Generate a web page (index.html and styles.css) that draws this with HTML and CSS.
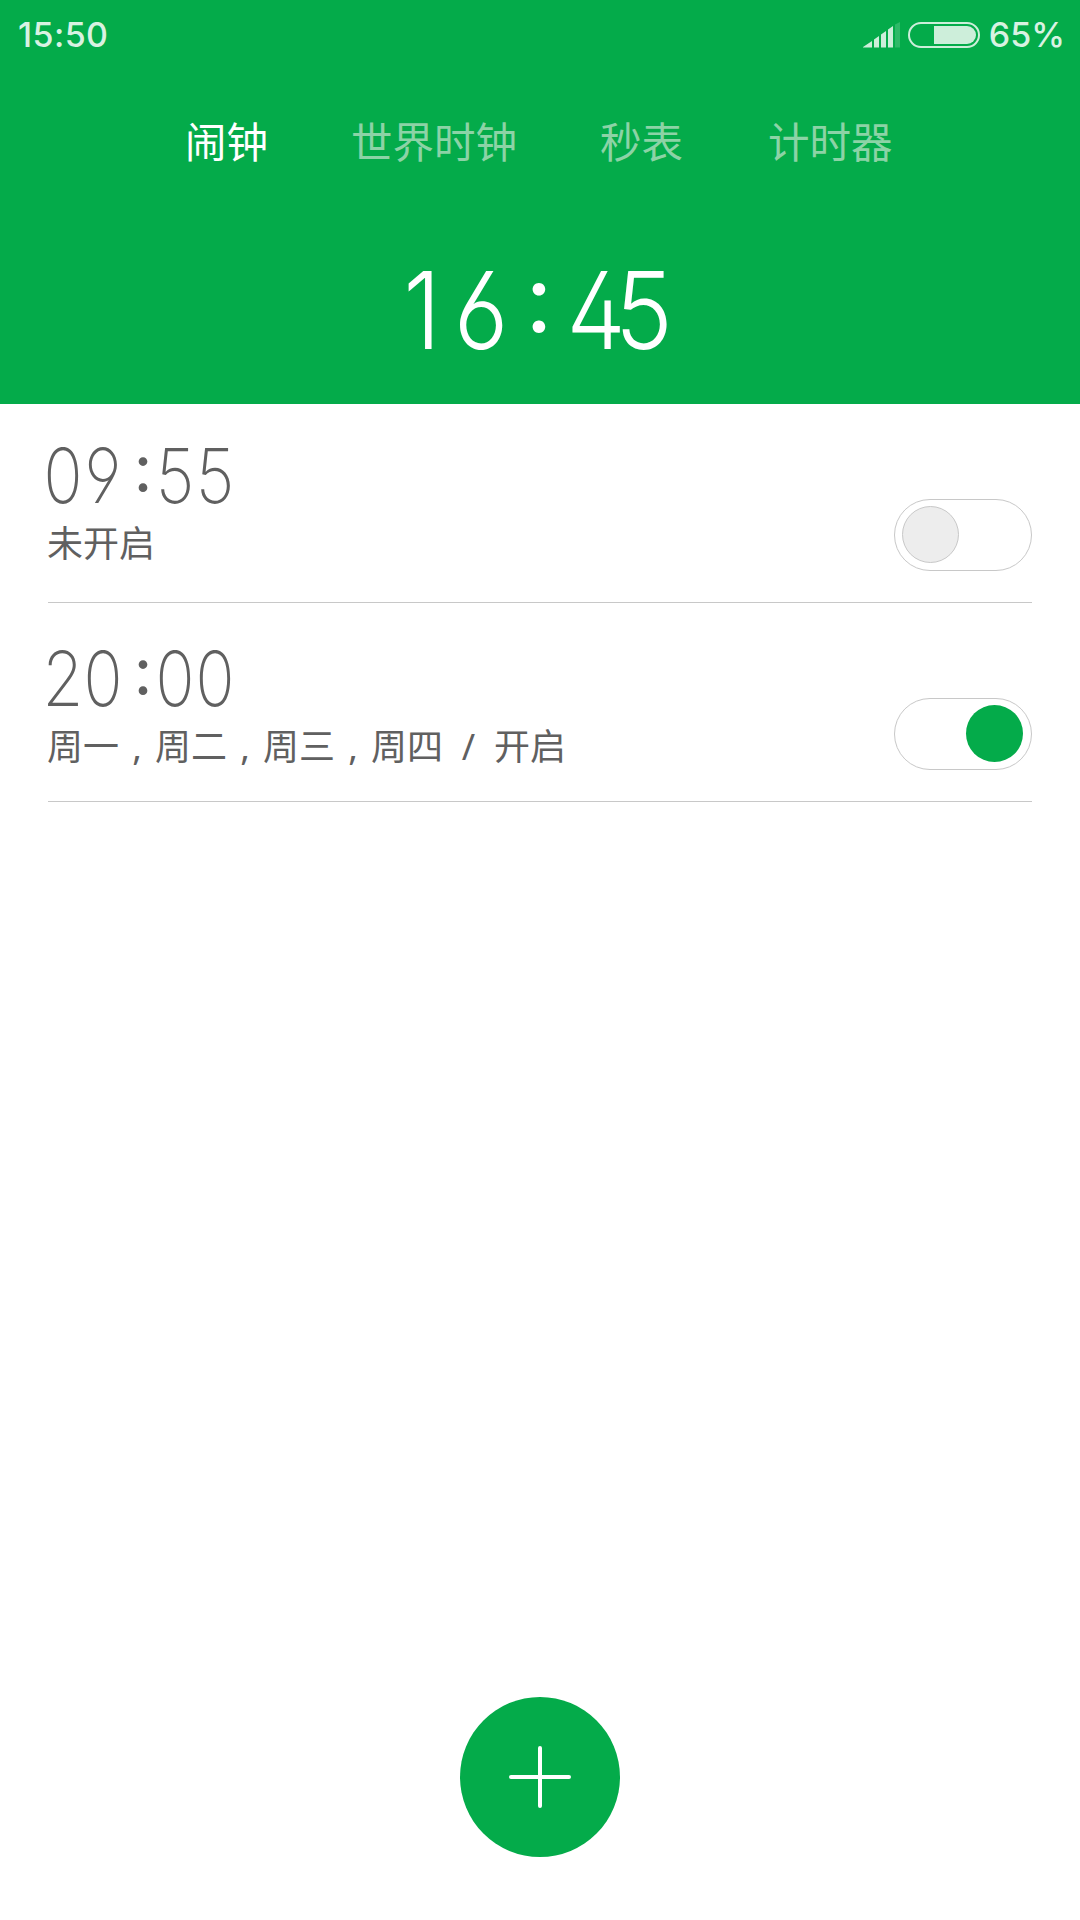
FILE: index.html
```html
<!DOCTYPE html>
<html lang="zh-CN">
<head>
<meta charset="utf-8">
<title>闹钟</title>
<link rel="stylesheet" href="styles.css">
</head>
<body>
<div class="screen">
  <header class="header">
    <div class="status">
      <span class="clock">15:50</span>
      <div class="indicators">
        <svg class="signal" width="37" height="26" viewBox="0 0 37 26">
          <path d="M0 25.5V25L9 19v6.500zM11 25.500V17.500l5-3.500v11.500zM18 25.500V12.500l5-3.500v16.500zM25 25.500V7.500l5-3.500v21.500z" fill="#cdeeda"/>
          <path d="M32 25.500V2.500L37 0v25.500z" fill="#2eb968"/>
        </svg>
        <svg class="battery" width="72" height="26" viewBox="0 0 72 26">
          <rect x="1" y="1" width="70" height="24" rx="12" fill="none" stroke="#cdeeda" stroke-width="2"/>
          <path d="M26 4h33a9 9 0 0 1 0 18H26z" fill="#cdeeda"/>
        </svg>
        <span class="percent">65%</span>
      </div>
    </div>
    <nav class="tabs">
      <span class="tab active">闹钟</span>
      <span class="tab">世界时钟</span>
      <span class="tab">秒表</span>
      <span class="tab last">计时器</span>
    </nav>
    <div class="time time-large"><span class="one">1</span><span class="six">6</span><i class="colon">:</i><span class="four">4</span><span class="five">5</span></div>
  </header>
  <main class="alarms">
    <section class="alarm">
      <div class="info">
        <div class="time"><span>0</span><span>9</span><i class="colon">:</i><span class="five">5</span><span class="five">5</span></div>
        <div class="repeat">未开启</div>
      </div>
      <div class="toggle"><div class="knob"></div></div>
    </section>
    <section class="alarm lower">
      <div class="info">
        <div class="time"><span class="two">2</span><span>0</span><i class="colon">:</i><span>0</span><span>0</span></div>
        <div class="repeat">周一<span class="comma">,</span>周二<span class="comma">,</span>周三<span class="comma">,</span>周四<span class="slash">/</span>开启</div>
      </div>
      <div class="toggle on"><div class="knob"></div></div>
    </section>
  </main>
  <footer class="footer">
    <div class="add">
      <svg width="64" height="64" viewBox="0 0 64 64"><path d="M32 3v58M3 32h58" stroke="#fff" stroke-width="4" stroke-linecap="round"/></svg>
    </div>
  </footer>
</div>
</body>
</html>
```
FILE: styles.css
```css
* { box-sizing: border-box; }
body { margin: 0; background: #fff; font-family: "Noto Sans CJK SC", sans-serif; }
.screen { width: 1080px; height: 1920px; display: flex; flex-direction: column; }
.header { height: 404px; background: #04ab4a; display: flex; flex-direction: column; }
.status { height: 70px; padding: 0 15px 0 18px; display: flex; align-items: center; justify-content: space-between; color: #d9f2e2; font: 500 34px/70px Inter, sans-serif; }
.clock { letter-spacing: .4px; }
.indicators { display: flex; align-items: center; }
.signal { margin-right: 8px; }
.battery { margin-right: 9px; }
.tabs { display: flex; height: 143px; padding: 40px 0 0 185px; font-size: 41.5px; line-height: 60px; color: #8cd3a6; white-space: nowrap; }
.tab { margin-right: 83px; }
.tab.active { color: #fff; }
.tab.last { margin-left: 2px; }
.time { display: flex; font-family: Inter, sans-serif; font-weight: 250; font-size: 76px; line-height: 76px; color: #606060; font-feature-settings: "cv02", "cv03", "cv04"; }
.time span { width: 40px; display: flex; justify-content: center; transform: scaleX(.85); }
.time .five, .time .two { transform: scaleX(.88); }
.time .colon { width: 32px; padding-left: 8px; display: flex; justify-content: center; font-style: normal; font-weight: 400; font-size: 66px; line-height: 63px; }
.time-large { color: #fff; font-weight: 300; font-size: 107px; line-height: 107px; padding: 44px 0 0 394px; }
.time-large span { width: 48px; transform: scaleX(.88); }
.time-large .one { width: 56px; }
.time-large .six { width: 62px; }
.time-large .five { transform: scaleX(.91); }
.time-large .colon { width: 60px; padding: 0 6px 0 0; font-size: 95px; line-height: 82px; }
.alarms { padding: 0 48px; flex: 1; }
.alarm { height: 199px; border-bottom: 1px solid #c8c8c8; display: flex; justify-content: space-between; }
.info { padding-top: 33px; }
.lower .info { padding-top: 37px; }
.info .time { margin-left: -5px; }
.repeat { margin: 3px 0 0 -1px; font-size: 36px; line-height: 51px; color: #606060; white-space: nowrap; }
.comma, .slash { display: inline-block; text-align: center; width: 36px; font-family: "Noto Sans", sans-serif; line-height: 40px; }
.slash { width: 51px; }
.toggle { width: 138px; height: 72px; margin-top: 95px; border: 1px solid #c8c8c8; border-radius: 36px; padding: 6px 8px 6px 7px; display: flex; }
.knob { width: 57px; height: 57px; border-radius: 50%; background: #ededed; border: 1px solid #c8c8c8; }
.on { justify-content: flex-end; }
.on .knob { background: #04ab4a; border: 0; }
.footer { height: 223px; display: flex; justify-content: center; }
.add { width: 160px; height: 160px; border-radius: 50%; background: #04ab4a; display: flex; align-items: center; justify-content: center; }
```
